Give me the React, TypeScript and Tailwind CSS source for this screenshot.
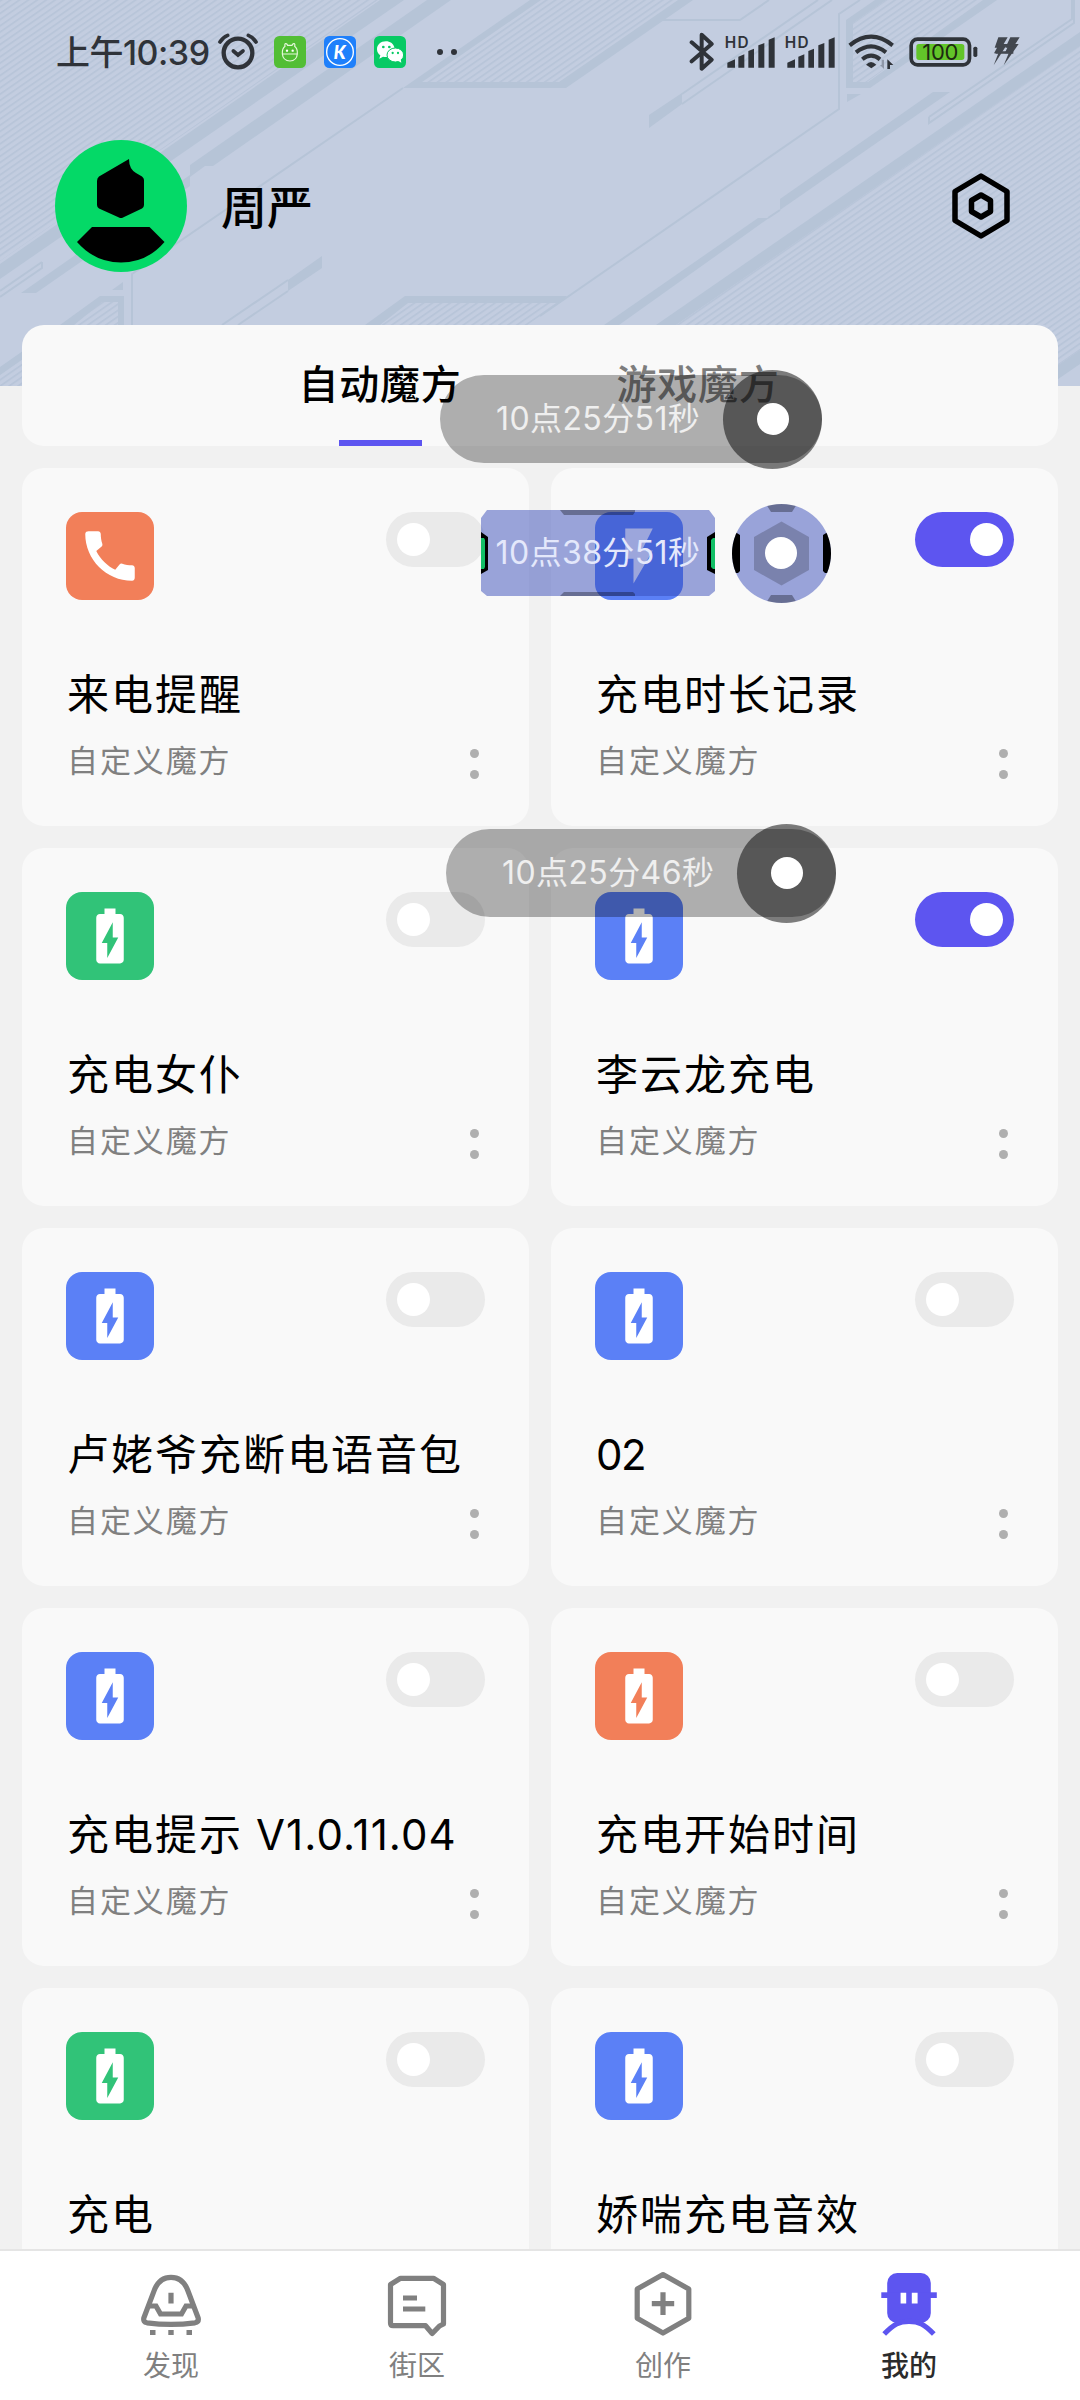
import React from 'react';
import { MdBatteryChargingFull, MdCall, MdFlashOn } from 'react-icons/md';

type IconKind = 'call' | 'bolt' | 'battery';

interface Cube {
  title: string;
  version?: string;
  icon: IconKind;
  color: string;
  on?: boolean;
}

const ORANGE = 'bg-[#f27f59]';
const GREEN = 'bg-[#31c378]';
const BLUE = 'bg-[#5b80f6]';

const cubes: Cube[] = [
  { title: '来电提醒', icon: 'call', color: ORANGE },
  { title: '充电时长记录', icon: 'bolt', color: BLUE, on: true },
  { title: '充电女仆', icon: 'battery', color: GREEN },
  { title: '李云龙充电', icon: 'battery', color: BLUE, on: true },
  { title: '卢姥爷充断电语音包', icon: 'battery', color: BLUE },
  { title: '02', icon: 'battery', color: BLUE },
  { title: '充电提示', version: 'V1.0.11.04', icon: 'battery', color: BLUE },
  { title: '充电开始时间', icon: 'battery', color: ORANGE },
  { title: '充电', icon: 'battery', color: GREEN },
  { title: '娇喘充电音效', icon: 'battery', color: BLUE },
];

const icons = { call: MdCall, bolt: MdFlashOn, battery: MdBatteryChargingFull };

function HeaderPattern() {
  return (
    <svg className="absolute left-0 top-0" width="1080" height="386" viewBox="0 0 1080 386">
      <defs>
        <pattern id="hatch" width="20" height="5.1" patternUnits="userSpaceOnUse" patternTransform="rotate(-34.8)">
          <rect width="20" height="1.9" fill="#b8c5d9" />
        </pattern>
      </defs>
      <rect width="1080" height="386" fill="#c3cde0" />
      <g fill="url(#hatch)">
        <path d="M0 0H378L0 261Z" />
        <path d="M422 82L541 0H678L559 82Z" />
        <path d="M853 82V23L886 0H978L867 82Z" />
        <path d="M676 325L1080 46V350L1045 374V325Z" />
        <path d="M408 303H560L520 330H370Z" />
        <path d="M102 302H118V330H62Z" />
        <path d="M0 372L22 357V386H0Z" />
      </g>
      <g fill="#b6c4d7">
        <path d="M380 0H404L0 279V264Z" />
        <path d="M427 0H451L213 166H205L190 177V186L36 293H21L190 175V165Z" />
        <path d="M403 88L530 0H541L422 82H559L678 0H693L566 88Z" />
        <path d="M846 88V20L875 0H886L853 23V82H868L983 0H997L870 88Z" />
        <path d="M847 94H861L847 102Z" />
        <path d="M649 115L682 93V104L649 128Z" />
        <path d="M933 92H950L780 210V199Z" />
        <path d="M758 218H769L619 325H604Z" />
        <path d="M1080 32V46L676 325H656Z" />
        <path d="M1080 350V364L1048 386H1028Z" />
        <path d="M365 325L405 296H567L560 303H408L380 325Z" />
        <path d="M60 325L100 296H124V325H118V302H102L74 325Z" />
        <path d="M0 367L30 346V354L0 375Z" />
        <path d="M112 290L123 282V290Z" />
        <path d="M322 256V268L288 291V280Z" />
      </g>
      <g fill="none" stroke="#b6c4d7" strokeWidth="2">
        <path d="M403 88L132 274V330" />
        <path d="M662 20H740L769 0" />
        <path d="M682 94L818 0M682 104L832 0" />
        <path d="M860 0L839 14V109L540 316" />
        <path d="M780 210L768 218" />
        <path d="M929 117L1072 19V0M929 117V123L1074 23V0" />
        <path d="M288 280L222 325M288 291L238 325" />
        <path d="M42 262V268L0 297M42 262L0 291" />
      </g>
    </svg>
  );
}

function Signal() {
  return (
    <svg width="50" height="32" viewBox="135 48 150 96" fill="#2f3339" className="shrink-0 overflow-visible">
      <text x="134" y="83" fontSize="46" fontWeight="600" fontFamily="Inter, sans-serif" textLength="72">HD</text>
      <path d="M142 143V128L165 118V143ZM175 143V110L193 103V143ZM205 143V93L222 86V143ZM235 143V76L253 69V143ZM266 143V59L284 52V143Z" />
    </svg>
  );
}

function StatusBar() {
  return (
    <div className="flex h-[104px] items-center pl-[56px] pr-[60px] text-[#2f3339]">
      <span className="w-[157px] whitespace-nowrap pt-[2px] text-[34px] font-medium leading-[40px] tracking-[-0.5px]">上午10:39</span>
      <svg width="40" height="38" viewBox="55 40 120 114" fill="none" stroke="#2f3339" strokeLinecap="round" className="ml-[5px]">
        <circle cx="115" cy="100" r="43" strokeWidth="13" />
        <path d="M61 67Q69 53 84 47M169 67Q161 53 146 47" strokeWidth="11" />
        <path d="M101 94L115 106L130 94" strokeWidth="11" />
      </svg>
      <svg width="32" height="32" viewBox="0 0 96 96" className="ml-[16px]">
        <rect width="96" height="96" rx="16" fill="#52be35" />
        <g fill="none" stroke="#e6f8dc" strokeWidth="3.5">
          <path d="M25 54Q24 38 33 31Q31 22 36 23Q40 24 41 28H54Q55 24 59 23Q64 22 62 31Q71 38 70 54Q68 74 48 75Q27 74 25 54ZM25 54H70" />
        </g>
        <circle cx="39" cy="44" r="3.5" fill="#fff" />
        <circle cx="56" cy="44" r="3.5" fill="#fff" />
      </svg>
      <svg width="32" height="32" viewBox="0 0 96 96" className="ml-[18px] overflow-visible">
        <rect width="96" height="96" rx="16" fill="#1f80fb" />
        <circle cx="48" cy="48" r="40" fill="none" stroke="#fff" strokeWidth="4" />
        <text x="47" y="69" textAnchor="middle" fontSize="56" fontWeight="900" fontStyle="italic" fill="#fff" fontFamily="Lato, sans-serif">K</text>
      </svg>
      <svg width="32" height="32" viewBox="0 0 96 96" className="ml-[18px]">
        <rect width="96" height="96" rx="16" fill="#07ca64" />
        <path d="M36 16C20 16 9 26 9 40C9 48 13 54 19 58L16 68L27 62C30 63 33 63 37 63C62 63 64 44 61 34C58 23 48 16 36 16Z" fill="#fff" />
        <ellipse cx="64" cy="57" rx="25" ry="21" fill="#fff" stroke="#07ca64" strokeWidth="3" />
        <path d="M72 74L82 80L80 70Z" fill="#fff" />
        <g fill="#07ca64">
          <circle cx="28" cy="33" r="4" />
          <circle cx="46" cy="33" r="4" />
          <circle cx="56" cy="51" r="3.4" />
          <circle cx="72" cy="51" r="3.4" />
        </g>
      </svg>
      <span className="ml-[31px] size-[6px] rounded-full bg-[#2f3339]" />
      <span className="ml-[8px] size-[6px] rounded-full bg-[#2f3339]" />

      <div className="ml-auto flex items-center">
        <svg width="26" height="40" viewBox="25 36 78 120" fill="none" stroke="#2f3339" strokeWidth="12" strokeLinecap="round" strokeLinejoin="round" className="mr-[10px]">
          <path d="M33 67L93 119L63 146V44L93 72L33 124" />
        </svg>
        <div className="flex gap-[10px]">
          <Signal />
          <Signal />
        </div>
        <svg width="48" height="36" viewBox="500 45 144 108" fill="none" stroke="#2f3339" strokeWidth="12" className="ml-[12px]">
          <path d="M508 79Q572 27 637 79" />
          <path d="M527 100Q572 64 617 100" />
          <path d="M546 121Q572 99 599 121" />
          <path d="M557 137Q572 121 588 137L573 148Z" fill="#2f3339" stroke="none" />
          <path d="M611 122V150L599 138H604V122Z" fill="#8e97a8" stroke="none" />
          <path d="M621 150V121L639 138H629V150Z" fill="#2f3339" stroke="none" />
        </svg>
        <svg width="69" height="30" viewBox="686 51 207 90" className="ml-[14px] overflow-visible">
          <rect x="692.5" y="57.5" width="175" height="77" rx="19" fill="none" stroke="#2f3339" strokeWidth="11" />
          <rect x="708" y="72" width="144" height="48" rx="8" fill="#62c529" />
          <rect x="879" y="80" width="12" height="31" rx="5" fill="#2f3339" />
          <text x="780" y="120" textAnchor="middle" fontSize="66" textLength="108" fill="#1d2a12" fontFamily="Inter, sans-serif">100</text>
        </svg>
        <svg width="28" height="30" viewBox="932 52 84 90" fill="#42474f" className="ml-[14px]">
          <path d="M951 53H979L967 73H978L937 137L951 101H938L947 84H940Z" />
          <path d="M987 53H1015L1002 73H1012L967 137L982 101H970L978 84H972Z" />
          <path d="M950 74H1000V81H946ZM946 95H996V102H942Z" />
        </svg>
      </div>
    </div>
  );
}

function Profile() {
  return (
    <div className="flex h-[132px] items-center pl-[55px] pr-[69px]">
      <svg width="132" height="132" viewBox="55 140 132 132">
        <circle cx="121" cy="206" r="66" fill="#04d967" />
        <path d="M129 159Q129 169 136 173L142 176.5Q144 178 144 180V205Q144 207 142 208.5L123 217.5Q121 218.5 119 217.5L99 208.5Q97 207 97 205V181Q97 178 99 176.5Z" />
        <path d="M92 227H149.5L164.5 242Q147 262.5 121 262.5T77 242Z" />
      </svg>
      <span className="ml-[34px] pt-[2px] text-[46px] font-medium leading-[60px]">周严</span>
      <svg width="60" height="68" viewBox="951 172 60 68" fill="none" stroke="#000" strokeWidth="5.5" strokeLinejoin="round" className="ml-auto">
        <path d="M981 176L1007 191.5V220.5L981 236L955 220.5V191.5Z" />
        <path d="M981 195L990.5 200.5V211.5L981 217L971.5 211.5V200.5Z" />
      </svg>
    </div>
  );
}

function Tabs() {
  return (
    <div className="mx-[22px] mt-[53px] flex h-[121px] rounded-[22px] bg-[#f9f9f9] pl-[199px]">
      <div className="flex w-[318px] flex-col items-center justify-between pt-[30px]">
        <span className="text-[40px] font-medium leading-[60px] tracking-[0.7px]">自动魔方</span>
        <span className="h-[6px] w-[83px] bg-[#5d55f0]" />
      </div>
      <div className="flex w-[318px] flex-col items-center pt-[30px]">
        <span className="text-[40px] font-medium leading-[60px] tracking-[0.7px] text-[#7d7d7d]">游戏魔方</span>
      </div>
    </div>
  );
}

function Toggle({ on }: { on?: boolean }) {
  return (
    <span className={`flex h-[55px] w-[99px] items-center rounded-full px-[11px] ${on ? 'justify-end bg-[#5d55f0]' : 'bg-[#eaeaea]'}`}>
      <span className="size-[33px] rounded-full bg-white" />
    </span>
  );
}

function CubeCard({ cube }: { cube: Cube }) {
  const Icon = icons[cube.icon];
  const numeric = /^\d+$/.test(cube.title);
  return (
    <div className="h-[358px] rounded-[22px] bg-[#f9f9f9] px-[44px] pt-[44px]">
      <div className="flex items-start justify-between">
        <span className={`flex size-[88px] items-center justify-center rounded-[16px] text-white ${cube.color}`}>
          <Icon size={66} />
        </span>
        <Toggle on={cube.on} />
      </div>
      <h3 className={`mt-[65px] h-[60px] whitespace-nowrap pl-[1px] text-[42px] leading-[60px] ${numeric ? 'tracking-[-1.5px]' : 'tracking-[2px]'}`}>
        {cube.title}
        {cube.version && <span className="ml-[13px] tracking-[1.1px]">{cube.version}</span>}
      </h3>
      <div className="mt-[16px] flex h-[40px] items-center justify-between pl-[1px] pr-[6px]">
        <span className="text-[31px] leading-[40px] tracking-[1.9px] text-[#808080]">自定义魔方</span>
        <span className="mt-[6px] flex flex-col gap-[12px]">
          <i className="size-[9px] rounded-full bg-[#afafaf]" />
          <i className="size-[9px] rounded-full bg-[#afafaf]" />
        </span>
      </div>
    </div>
  );
}

function TimePill({ time, className }: { time: string; className: string }) {
  return (
    <div className={`absolute flex h-[88px] items-center justify-between rounded-full bg-black/30 pl-[56px] ${className}`}>
      <span className="text-[32px] leading-[40px] tracking-[0.4px] text-[#efefef]">{time}</span>
      <span className="-my-[6px] flex size-[99px] items-center justify-center rounded-full bg-black/50">
        <span className="size-[32px] rounded-full bg-white" />
      </span>
    </div>
  );
}

function TechPanel() {
  return (
    <div className="absolute left-[481px] top-[504px] flex h-[99px] w-[350px] items-center justify-between">
      <div className="relative -top-px flex h-[86px] w-[234px] items-center justify-center">
        <svg className="absolute inset-0" width="234" height="86" viewBox="0 0 234 86">
          <path d="M6 0H228L234 8V81L228 86H6L0 81V8Z" fill="#3448b7" fillOpacity="0.487" />
          <path d="M79 0H154V2L152 5H83ZM83 82H152L154 84V86H79Z" fill="#000" fillOpacity="0.32" />
          <path d="M0 22L7 27V60L0 64ZM234 22L226 27V60L234 64Z" fill="#000" />
          <path d="M0 28H3L4 30V57L3 59H0ZM234 28H232L230 30V57L232 59H234Z" fill="#12bf66" />
        </svg>
        <span className="relative text-[32px] leading-[40px] tracking-[0.4px] text-[#e4e8fb]">10点38分51秒</span>
      </div>
      <svg width="99" height="99" viewBox="0 0 99 99">
        <defs>
          <clipPath id="dial">
            <circle cx="49.5" cy="49.5" r="49.5" />
          </clipPath>
        </defs>
        <g clipPath="url(#dial)">
          <rect width="99" height="99" fill="#3448b7" fillOpacity="0.487" />
          <path d="M34 0H65L60 8H39ZM39 91H60L65 99H34Z" fill="#000" fillOpacity="0.32" />
          <path d="M0 26L8 31V67L6 69H0ZM99 26L91 31V67L93 69H99Z" fill="#000" />
          <path d="M49.5 17.5L77 33V66L49.5 81.5L22 66V33Z" fill="#000" fillOpacity="0.2" />
        </g>
        <circle cx="49" cy="49" r="16" fill="#fff" />
      </svg>
    </div>
  );
}

const DiscoverIcon = () => (
  <svg width="64" height="68" viewBox="0 0 64 68" fill="none" stroke="currentColor" strokeWidth="5.2">
    <path d="M32 7.3C22.5 7.3 17.5 14 15 21L4.8 48Q4 52 8 52.8Q32 56 56 52.8Q60 52 59.2 48L49 21C46.5 14 41.5 7.3 32 7.3Z" />
    <path d="M10 36H17L21.5 44H42.5L47 36H54" />
    <path d="M32 22.7V33.5M11 62.5H16.5M29.3 62.5H34.7M47.5 62.5H53" />
  </svg>
);

const BlockIcon = () => (
  <svg width="64" height="68" viewBox="0 0 64 68" fill="none" stroke="currentColor" strokeWidth="5.2" strokeLinejoin="round">
    <path d="M15.5 8.3H48.5L58.5 14.5V54L54.5 56L47.2 63.5L40.6 55.7H8Q5.5 55.7 5.5 53V14.5Z" />
    <path d="M18 28H32M18 39H40.3" />
  </svg>
);

const CreateIcon = () => (
  <svg width="64" height="68" viewBox="0 0 64 68" fill="none" stroke="currentColor" strokeWidth="5.2" strokeLinejoin="round">
    <path d="M32 4.5L57.8 19V48.3L32 63L6.2 48.3V19Z" />
    <path d="M32 22.3V45M20.8 33.6H43.2" />
  </svg>
);

const MineIcon = () => (
  <svg width="64" height="68" viewBox="0 0 64 68">
    <rect x="10.2" y="3" width="43.6" height="50" rx="10" fill="#5d55f0" />
    <rect x="4.3" y="22.3" width="55.5" height="5.7" fill="#5d55f0" />
    <path d="M20 56Q32 51 44 56Z" fill="#fff" />
    <path d="M7.2 64C17 54 22 51.4 32 51.4S47 54 56.8 64" fill="none" stroke="#5d55f0" strokeWidth="5.2" />
    <path d="M23.6 22.7H29.2V33.4H23.6ZM34.8 22.7H40.6V33.4H34.8Z" fill="#fff" />
  </svg>
);

const navItems = [
  { label: '发现', Icon: DiscoverIcon },
  { label: '街区', Icon: BlockIcon },
  { label: '创作', Icon: CreateIcon },
  { label: '我的', Icon: MineIcon, active: true },
];

export default function App() {
  return (
    <div className="relative flex h-[2400px] w-[1080px] flex-col overflow-hidden bg-[#f1f1f1] font-[Inter,'Noto_Sans_CJK_SC',sans-serif] text-black">
      <HeaderPattern />
      <header className="relative">
        <StatusBar />
        <div className="h-[36px]" />
        <Profile />
        <Tabs />
      </header>

      <main className="relative mt-[22px] grid min-h-0 flex-1 auto-rows-max grid-cols-2 gap-[22px] overflow-hidden px-[22px]">
        {cubes.map((cube) => (
          <CubeCard key={cube.title} cube={cube} />
        ))}
      </main>

      <nav className="relative flex h-[151px] shrink-0 border-t-2 border-[#e5e5e5] bg-white px-[48px]">
        {navItems.map(({ label, Icon, active }) => (
          <div key={label} className={`flex flex-1 flex-col items-center pt-[19px] ${active ? 'text-[#2b2b2b]' : 'text-[#808080]'}`}>
            <Icon />
            <span className={`mt-[10px] text-[28px] leading-[36px] ${active ? 'font-medium' : ''}`}>{label}</span>
          </div>
        ))}
      </nav>

      <TimePill time="10点25分51秒" className="left-[440px] top-[375px] w-[382px]" />
      <TechPanel />
      <TimePill time="10点25分46秒" className="left-[446px] top-[829px] w-[390px]" />
    </div>
  );
}
